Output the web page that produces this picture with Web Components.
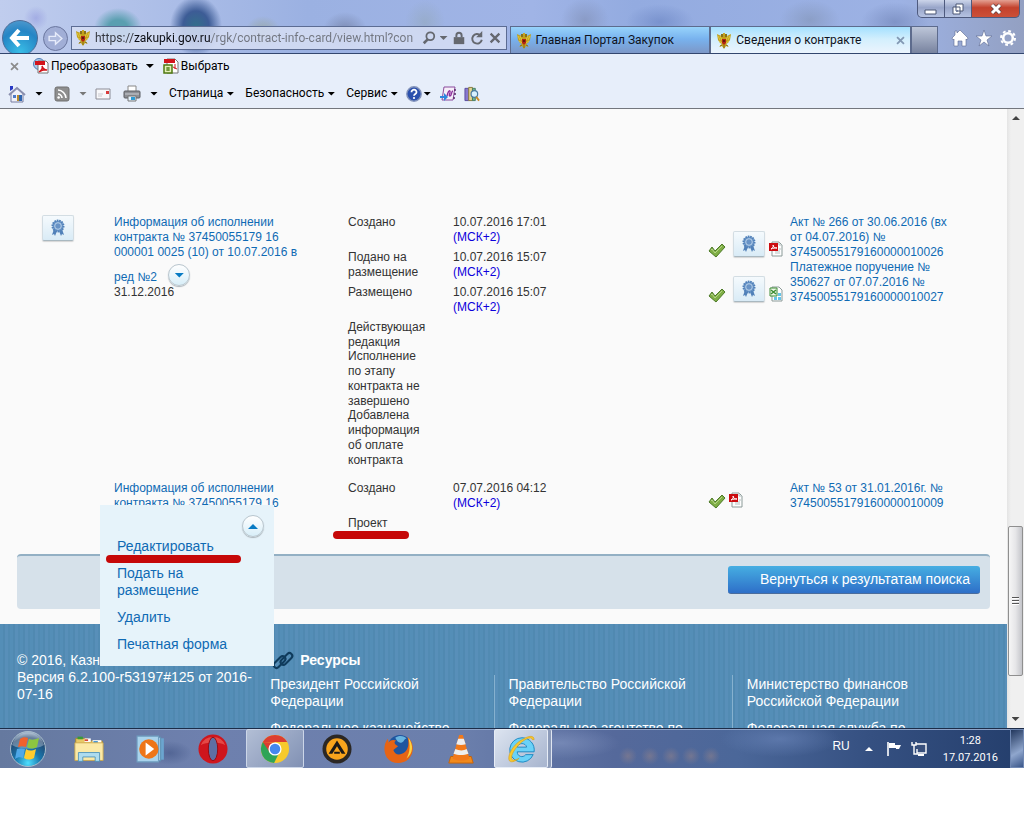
<!DOCTYPE html>
<html lang="ru">
<head>
<meta charset="utf-8">
<title>Сведения о контракте</title>
<style>
    body {
        margin: 0;
        background: #fff;
        font: 12px/15px "Liberation Sans", Arial, sans-serif;
        --ui-font: Roboto, "Noto Sans", sans-serif;
        --link: #0f6ab4;
        --mark: #c60808;
    }
</style>
</head>
<body>
<desk-top>
    <browser-chrome>
        <browser-tab>Главная Портал Закупок</browser-tab>
        <browser-tab active>Сведения о контракте</browser-tab>
    </browser-chrome>
    <page-view>
        <contract-records></contract-records>
        <action-bar>Вернуться к результатам поиска</action-bar>
        <site-footer></site-footer>
    </page-view>
    <task-bar></task-bar>
</desk-top>

<script>
// Shared inline icons, [viewBox, markup]
const ICONS = {
    eagle: ['0 0 16 16', `<path d="M1 1l1 6 2 3 2 1-3 3 3-1 2 3 2-3 3 1-3-3 2-1 2-3 1-6-2 1-2 1-1-2H7L6 3 3 2z" fill="#c2a01a"/><path d="M2 3l2 4M14 3l-2 4M4 3l2 4M12 3l-2 4M3 8l3 2M13 8l-3 2" stroke="#e6d04c" stroke-width=".800"/><path d="M5 1h2v3H5zM9 1h2v3H9z" fill="#86701c"/><path d="M7 0h2v2H7z" fill="#c9a622"/><path d="M6 6h4v4l-2 2-2-2z" fill="#b12414"/><path d="M7 7h2v2H7z" fill="#5d1a12"/><path d="M4 13l2-1M12 13l-2-1M8 12v3" stroke="#86701c"/>`],
    search: ['0 0 16 16', `<circle cx="9.500" cy="6" r="4.500" fill="none" stroke="#65686f" stroke-width="2"/><path d="M6.500 9.500L2 14" stroke="#65686f" stroke-width="3"/>`],
    lock: ['0 0 16 16', `<path d="M2 7h12v8H2z" fill="#65686f"/><path d="M5 7V5a3 3 0 0 1 6 0v2" fill="none" stroke="#65686f" stroke-width="2.200"/>`],
    refresh: ['0 0 16 16', `<path d="M12 5a5.500 5.500 0 1 0 1.500 5" fill="none" stroke="#65686f" stroke-width="2.200"/><path d="M14 0v7H7z" fill="#65686f"/>`],
    cross: ['0 0 16 16', `<path d="M3 3l10 10M13 3L3 13" stroke="currentColor" stroke-width="2.600"/>`],
    back: ['0 0 24 24', `<path d="M11 4l-7 8 7 8M5 12h16" fill="none" stroke="#fff" stroke-width="4"/>`],
    forward: ['0 0 24 24', `<path d="M3 9h9V4l9 8-9 8v-5H3z" fill="#aebadd" stroke="#e6ebfa" stroke-width="2"/>`],
    home: ['0 0 16 16', `<path d="M8 0l8 8-1 2-1-1v7H10v-5H6v5H2V9l-1 1-1-2 3-3V1h2v2z" fill="#fff" stroke="#5b6891" stroke-width=".600"/>`],
    star: ['0 0 16 16', `<path d="M8 0l2 6h6l-5 4 2 6-5-4-5 4 2-6-5-4h6z" fill="#fff" stroke="#5b6891" stroke-width=".600"/>`],
    gear: ['0 0 16 16', `<circle cx="8" cy="8" r="7" fill="none" stroke="#fff" stroke-width="2" stroke-dasharray="2.800 2.700"/><circle cx="8" cy="8" r="4.800" fill="none" stroke="#fff" stroke-width="2.600"/>`],
    pdfConvert: ['0 0 16 16', `<circle cx="6" cy="6" r="5.500" fill="#a9c7e8" stroke="#4f7db5"/><path d="M5 3h8l2 2v10H5z" fill="#fff" stroke="#777"/><path d="M2 3h10v4H2z" fill="#d2141b"/><path d="M6 14c3-2 4-4 3-6 1 3 3 4 5 4-3-1-5 0-8 2z" fill="none" stroke="#d2141b" stroke-width="1.500"/>`],
    pdfSelect: ['0 0 16 16', `<path d="M4 1h8l3 3v11H4z" fill="#fff" stroke="#777"/><path d="M1 1h11v4H1z" fill="#d2141b"/><path d="M10 9l4 2M12 6v5" stroke="#d2141b"/><path d="M1 7h8v8H1z" fill="#e4efb9" stroke="#4f7a11" stroke-width="1.500"/><path d="M3 10h4M3 12h4M5 9v4" stroke="#4f7a11"/>`],
    house: ['0 0 18 18', `<path d="M3 8l6-5 6 5v9H3z" fill="#eef0fa" stroke="#777ca0"/><path d="M1 10l8-7 8 7" fill="none" stroke="#8a8fae" stroke-width="2"/><path d="M2 1h3v3L2 6z" fill="#2738c4"/><path d="M5 10h3v3H5z" fill="#4c79c8"/><path d="M9 10h2v6H9z" fill="#b98a2a"/><path d="M11 10h3v6h-3z" fill="#2f66b0"/>`],
    rss: ['0 0 16 16', `<rect x="1" y="1" width="14" height="14" rx="2" fill="#8e8e8e" stroke="#707070"/><path d="M4 4c4 0 8 4 8 8M4 8c2 0 4 2 4 4" fill="none" stroke="#fff" stroke-width="1.600"/><circle cx="4.600" cy="11.500" r="1.300" fill="#fff"/>`],
    mail: ['0 0 16 12', `<path d="M1 1h14v10H1z" fill="#f8f8fa" stroke="#8c8c96"/><path d="M11 3h3v3h-3z" fill="#d83a3a"/><path d="M3 6h5M3 8h4" stroke="#c9c9d0"/>`],
    printer: ['0 0 18 18', `<path d="M5 1h8v6H5z" fill="#fff" stroke="#888"/><rect x="1" y="6" width="16" height="7" rx="1" fill="#8d8f95" stroke="#5b5d63"/><path d="M2 9h14" stroke="#c9ccd2"/><path d="M5 11h8v5H5z" fill="#e5f1fb" stroke="#777"/><path d="M8 12h4v3H8z" fill="#2e9bd4"/>`],
    help: ['0 0 16 16', `<circle cx="8" cy="8" r="7.200" fill="#2b50ad" stroke="#8494bb" stroke-width="1.400"/><path d="M5.500 6.200c0-3.400 5.200-3.200 5 0 0 1.800-2.500 1.800-2.500 3.600" fill="none" stroke="#fff" stroke-width="1.800"/><circle cx="8" cy="12" r="1.100" fill="#fff"/>`],
    onenote: ['0 0 16 16', `<path d="M4 1h11l-2 13H2z" fill="#f6eef9" stroke="#8a4b9c"/><path d="M7 10c1-4 2-6 3-5s-2 5 0 5 1-5 3-5" fill="none" stroke="#8c2f9c" stroke-width="1.300"/><path d="M15 3v2M15 7v2M14 11v2" stroke="#5a2468" stroke-width="1.500"/><path d="M0 10h4V7l4 4-4 4v-3H0z" fill="#2f86dd"/>`],
    research: ['0 0 17 16', `<path d="M1 2h4v13H1z" fill="#8878cf" stroke="#584b9c"/><path d="M5 1h4v14H5z" fill="#e4d591" stroke="#897a3c"/><path d="M9 2h3v13H9z" fill="#6fb491" stroke="#477c62"/><circle cx="11" cy="8" r="3.500" fill="#d8f1ff" stroke="#4d7ca3" stroke-width="1.300"/><path d="M13 11l3 4" stroke="#c98a24" stroke-width="2"/>`],
    rosette: ['0 0 16 16', `<path d="M4 9l-2 6 2-1 1 2 2-5h2l2 5 1-2 2 1-2-6z" fill="#5181b9"/><circle cx="8" cy="6" r="5.500" fill="#6a96c8" stroke="#5181b9" stroke-width="2" stroke-dasharray="1.600 .800"/><circle cx="8" cy="6" r="3.300" fill="#6893c6" stroke="#b9d2ea"/>`],
    check: ['0 0 16 14', `<path d="M0 8l3-4 3 4 7-7 3 3-9 10z" fill="#7fae45" stroke="#4d7a28" stroke-linejoin="round"/><path d="M2 7l1-1 3 4 7-7" fill="none" stroke="#b5d488"/>`],
    pdf: ['0 0 14 16', `<path d="M3 1h7l3 3v11H3z" fill="#fdfdfd" stroke="#8b9a98"/><path d="M10 1v3h3M6 12h5M6 10h5M10 8h2" fill="none" stroke="#b6c1c1"/><path d="M0 2h9v8H0z" fill="#cc0c10"/><path d="M2 8c2-1 3-3 2-4 0 2 2 3 4 3-2 0-4 0-6 1z" fill="none" stroke="#fff"/>`],
    xls: ['0 0 14 16', `<path d="M3 1h7l3 3v11H3z" fill="#fdfdfd" stroke="#8b9a98"/><path d="M9 7h3v3H9zM5 11h3v3H5zM9 11h3v3H9z" fill="#65c4e8"/><path d="M1 2h7v8H1z" fill="#eef7e7" stroke="#3d8d34"/><path d="M2 4l5 4M7 4L2 8" stroke="#3d8d34" stroke-width="1.500"/>`],
    chain: ['0 0 20 18', `<g fill="none" stroke="#0f3b5c" stroke-width="2.200"><rect x="-1" y="8" width="15" height="6" rx="3" transform="rotate(-45 6 11)"/><rect x="6" y="4" width="15" height="6" rx="3" transform="rotate(-45 14 7)"/></g>`],
    orb: ['0 0 38 38', `<defs><radialGradient id="o" cx=".5" cy=".9" r=".9"><stop offset="0" stop-color="#4fe0ff"/><stop offset=".4" stop-color="#1877ad"/><stop offset=".8" stop-color="#24466f"/><stop offset="1" stop-color="#a7bdd3"/></radialGradient></defs><circle cx="19" cy="19" r="17.500" fill="url(#o)" stroke="#a9bccb"/><path d="M3 15a16.500 16.500 0 0 1 32 0c-8 5-24 5-32 0z" fill="#fff" opacity=".3"/><path d="M11 9c3-2 5-2 8-1l-2 9c-3-1-5-1-8 0z" fill="#f0622c"/><path d="M20 9c3 1 5 1 10-1l-2 9c-4 2-7 2-10 0z" fill="#8dc63f"/><path d="M8 19c3-1 5-1 8 0l-2 9c-3-1-5-1-8 1z" fill="#4fa8e8"/><path d="M17 19c3 2 6 2 10 0l-2 9c-4 2-7 2-10 0z" fill="#ffcc2e"/>`],
    explorer: ['0 0 34 30', `<path d="M2 3h12l2 3h16v20H2z" fill="#e8c966" stroke="#a68629"/><path d="M4 1h6v3H4z" fill="#3a9b36"/><path d="M12 3h7v4h-7z" fill="#fff"/><path d="M12 4h4v2h-4z" fill="#d84430"/><path d="M21 5h10v3H21z" fill="#fff"/><path d="M22 6h5v2h-5z" fill="#3d94d6"/><path d="M1 8h32v20H1z" fill="#fbe9a6" stroke="#c8a64c"/><path d="M5 29V19h24v10h-5v-5H10v5z" fill="#aedcef" stroke="#4f93b8"/>`],
    player: ['0 0 28 26', `<path d="M9 3h17v20H9z" fill="#6ba5cf"/><path d="M6 2h17v22H6z" fill="#9fcae5" stroke="#5f93b5"/><path d="M1 1h20v24H1z" fill="#a9d3ec" stroke="#6f9ec0"/><circle cx="12" cy="13" r="9" fill="#ee7518"/><path d="M9 7l8 6-8 6z" fill="#fff"/>`],
    opera: ['0 0 32 32', `<ellipse cx="16" cy="16" rx="15.500" ry="15.500" fill="#cf151d"/><path d="M3 12a14 14 0 0 1 26 0c-5-4-21-4-26 0z" fill="#f26a62" opacity=".6"/><ellipse cx="16" cy="16" rx="5" ry="12.500" fill="#5d6fa3" stroke="#98090f"/>`],
    chrome: ['0 0 32 32', `<circle cx="16" cy="16" r="15" fill="#f7ca2d"/><path d="M16 16L3 8.500A15 15 0 0 0 15 31l6-12z" fill="#2fa457"/><path d="M3 8.500A15 15 0 0 1 29 8.500H16z" fill="#dc3e31"/><path d="M3 8.500L10 19l6-10z" fill="#dc3e31"/><circle cx="16" cy="16" r="7" fill="#fff"/><circle cx="16" cy="16" r="5.600" fill="#4587ee"/>`],
    aimp: ['0 0 32 32', `<circle cx="16" cy="16" r="15.500" fill="#2b2724"/><circle cx="16" cy="16" r="11.500" fill="#f9a41c"/><path d="M16 7l9 14h-4l-5-8-5 8H7zM13 19h6v2h-6z" fill="#1d1a18"/>`],
    firefox: ['0 0 32 32', `<circle cx="17" cy="14" r="13" fill="#1f559f"/><path d="M12 4c4-3 10-2 12 1-3 0-2 3-5 4s-5-1-7-5z" fill="#67b3df"/><path d="M25 3c7 6 8 17 1 24-7 6-18 5-23-2C-1 18 0 10 4 5l1 4c2-3 5-3 8-2-3 2-2 4 2 6l-5 4c1 4 5 6 9 4 5-1 9-8 6-18z" fill="#e66414"/><path d="M26 4c6 8 5 17-2 22 4-7 4-14 2-22z" fill="#ffd340"/>`],
    vlc: ['0 0 28 32', `<path d="M3 24h22l2 7H1z" fill="#f08a1c" stroke="#c66208"/><path d="M12 1h4l7 25c-4 3-14 3-18 0z" fill="#f1791a"/><path d="M11 5h6l2 6c-3 1-7 1-10 0zM8 16c4 2 9 2 12 0l2 5c-5 2-11 2-16 0z" fill="#eee"/>`],
    ie: ['0 0 32 32', `<path d="M17 4a13 13 0 1 0 12 18h-8c-3 4-9 2-9-3h18A13 13 0 0 0 17 4zm-5 10c1-5 9-5 10 0z" fill="#6ad2f8" stroke="#1a86c0"/><path d="M30 6c0-5-6-4-11-1C10 9 2 20 3 27c1 5 7 2 11-1-5 2-8 3-8-1 0-5 7-14 13-18 4-3 9-4 9-1z" fill="#f8c92f" stroke="#d49b16" stroke-width=".600"/>`],
    flag: ['0 0 14 16', `<path d="M1 1v14" stroke="#fff" stroke-width="1.600"/><path d="M2 2h6v2h6l-2 4H9V7H2z" fill="#fff"/>`],
    network: ['0 0 16 16', `<path d="M5 3h10v9H6V8" fill="#39507c" stroke="#fff" stroke-width="1.400"/><path d="M7 14h6" stroke="#fff" stroke-width="2"/><path d="M1 1v3h4V1M3 4v9h4" fill="none" stroke="#fff" stroke-width="1.400"/>`]
};

// Attach an open shadow root and fill it
function render(host, html) {
    host.attachShadow({mode: 'open'}).innerHTML = html;
}

class UiIcon extends HTMLElement {
    constructor() {
        super();
        this.attachShadow({mode: 'open'});
    }

    connectedCallback() {
        const [box, markup] = ICONS[this.getAttribute('name')];
        this.shadowRoot.innerHTML = `
            <style>
                :host { display: inline-block; flex: none; width: 16px; height: 16px; }
                svg { display: block; width: 100%; height: 100%; overflow: visible; }
            </style>
            <svg viewBox="${box}" aria-hidden="true">${markup}</svg>
        `;
    }
}
customElements.define('ui-icon', UiIcon);

// Small black triangle used by the tool bars
class DropArrow extends HTMLElement {
    constructor() {
        super();
        render(this, `
            <style>
                :host {
                    display: inline-block;
                    flex: none;
                    width: 8px;
                    height: 4px;
                    background: currentColor;
                    clip-path: polygon(0 0, 100% 0, 50% 100%);
                }
            </style>
        `);
    }
}
customElements.define('drop-arrow', DropArrow);

class DeskTop extends HTMLElement {
    constructor() {
        super();
        render(this, `
            <style>
                :host {
                    display: flex;
                    flex-direction: column;
                    height: calc(100vh - 72px);
                    overflow: hidden;
                }
            </style>
            <slot></slot>
        `);
    }
}
customElements.define('desk-top', DeskTop);

class BrowserTab extends HTMLElement {
    constructor() {
        super();
        render(this, `
            <style>
                :host { display: block; flex: 1; min-width: 0; }
                .tab {
                    display: flex;
                    align-items: center;
                    gap: 4px;
                    height: 28px;
                    padding: 0 4px 0 5px;
                    border: 1px solid #5d6b8d;
                    border-bottom: 0;
                    box-sizing: border-box;
                    background: linear-gradient(#97d3fb, #78b2ee 45%, #7d95c4);
                    color: #10131c;
                    font: 12px/15px var(--ui-font);
                }
                :host([active]) .tab { background: linear-gradient(#a4e0ff, #d3effd 45%, #edf4fd); }
                button { flex: 1; padding: 0; border: 0; background: none; font: inherit; color: inherit; text-align: left; white-space: nowrap; }
                .close { display: none; flex: none; color: #8298b3; }
                .close ui-icon { display: block; width: 11px; height: 11px; }
                :host([active]) .close { display: block; }
            </style>
            <div class="tab">
                <ui-icon name="eagle"></ui-icon>
                <button><slot></slot></button>
                <button class="close" aria-label="Закрыть вкладку"><ui-icon name="cross"></ui-icon></button>
            </div>
        `);
    }
}
customElements.define('browser-tab', BrowserTab);

class BrowserChrome extends HTMLElement {
    constructor() {
        super();
        render(this, `
            <style>
                :host { display: block; flex: none; font: 12px/15px var(--ui-font); }
                button { padding: 0; border: 0; background: none; font: inherit; color: inherit; }

                /* Glass frame with the wallpaper showing through */
                .glass {
                    height: 54px;
                    overflow: hidden;
                    box-sizing: border-box;
                    border-bottom: 1px solid #33466e;
                    background:
                        radial-gradient(circle at 36px 18px, #8d93dc88 0, transparent 12px),
                        radial-gradient(ellipse 24px 20px at 118px 28px, #5a9fb0 40%, transparent),
                        radial-gradient(ellipse 26px 30px at 196px 26px, #336f8b 0, #3d5c96 50%, #3d5c9600),
                        radial-gradient(ellipse 18px 16px at 263px 32px, #96a497cc, transparent),
                        radial-gradient(ellipse 22px 18px at 345px 30px, #7583a8cc, transparent),
                        radial-gradient(ellipse 20px 22px at 425px 22px, #94a9c0aa, transparent),
                        radial-gradient(ellipse 24px 22px at 585px 20px, #8291b8aa, transparent),
                        radial-gradient(ellipse 34px 18px at 660px 22px, #6c86c4aa, transparent),
                        radial-gradient(ellipse 30px 20px at 810px 20px, #8496b9aa, transparent),
                        radial-gradient(ellipse 34px 20px at 895px 22px, #7185b8aa, transparent),
                        linear-gradient(90deg, #c0cdee, #9bb1e2 30%, #a0b4e6 52%, #93abe0 62%, #9db2e4 88%, #93a0c2);
                }
                .controls { display: flex; justify-content: flex-end; height: 18px; padding-right: 4px; }
                .controls button {
                    display: grid;
                    place-items: center;
                    width: 27px;
                    border: 1px solid #4e5a7e;
                    border-width: 0 1px 1px 0;
                    background: linear-gradient(#ccd5ea, #98a5c9 45%, #b6c3e2);
                }
                .controls .min { width: 28px; border-left-width: 1px; border-radius: 0 0 0 5px; }
                .controls .shut { width: 48px; border-radius: 0 0 5px 0; background: linear-gradient(#e4a192, #c3412c 45%, #cc5038); }
                .controls svg { width: 14px; height: 12px; }

                .nav { display: flex; align-items: flex-start; padding: 8px 8px 0 2px; }
                .back {
                    width: 36px; height: 36px;
                    margin: -6px 5px 0 0;
                    border: 1px solid #4c6c97;
                    border-radius: 50%;
                    background: radial-gradient(circle at 50% 90%, #39bde6, #2585c5 60%, #5c9fd0);
                }
                .back ui-icon { width: 24px; height: 24px; vertical-align: middle; }
                .next {
                    width: 25px; height: 25px;
                    margin-right: 3px;
                    border: 1px solid #6b779f;
                    border-radius: 50%;
                    background: #a1aed6;
                }
                .next ui-icon { width: 17px; height: 17px; vertical-align: middle; }
                .address {
                    display: flex;
                    flex: 426;
                    align-items: center;
                    gap: 4px;
                    height: 24px;
                    padding: 0 4px 0 3px;
                    border: 1px solid #5c6c93;
                    box-sizing: border-box;
                    background: #d5def3dd;
                    color: #65686f;
                }
                /* Host name is darker than the rest of the address */
                .address input {
                    flex: 1;
                    min-width: 0;
                    padding: 0;
                    border: 0;
                    font: inherit;
                    background: linear-gradient(90deg, #34373f 38px, #0c0e14 38px 116px, #71757f 116px);
                    -webkit-background-clip: text;
                    background-clip: text;
                    color: transparent;
                }
                .address button { display: flex; }
                .address button ui-icon { width: 14px; height: 14px; }
                .tabs { display: flex; flex: 401; margin-left: 3px; }
                .new-tab { width: 27px; height: 28px; border: 1px solid #5d6b8d; background: linear-gradient(#bdc6d9, #78839f); }
                .tools { display: flex; gap: 8px; padding: 4px 0 0 14px; }
                .tools button { display: flex; }

                .bars { padding: 0 8px; border-bottom: 1px solid #73767d; background: #e7eefa; color: #000; }
                .bar { display: flex; align-items: center; white-space: nowrap; }
                .bar button { display: flex; align-items: center; }
                .adobe { height: 24px; }
                .adobe .x { margin: 0 13px 0 1px; color: #8c8c8c; }
                .adobe .x ui-icon { width: 11px; height: 11px; }
                .adobe button { gap: 2px; }
                .adobe .arrow { margin: 0 9px 0 8px; }
                .command { height: 30px; padding-top: 1px; box-sizing: border-box; }
                .command .text { gap: 2px; margin-right: 11px; }
                .command drop-arrow { margin-left: 1px; }
                .pair { gap: 8px; margin-right: 11px; }
                .pair.dim drop-arrow { color: #777; }
                .pair ui-icon { width: 18px; height: 18px; }
                .pair.dim ui-icon { width: 16px; height: 16px; }
                .mail { margin: 0 12px 0 -3px; }
                .mail ui-icon { height: 12px; }
                .help { margin: 0 9px 0 -3px; }
                .note { margin-right: 8px; }
            </style>
            <div class="glass">
                <div class="controls">
                    <button class="min" aria-label="Свернуть"><svg viewBox="0 0 14 12"><path d="M1 7h11v4H1z" fill="#fff" stroke="#4b5675"/></svg></button>
                    <button aria-label="Развернуть"><svg viewBox="0 0 14 12"><path d="M5 1h7v7H5zM2 4h7v7H2z" fill="#fff" stroke="#4b5675"/><path d="M5 7h2v2H5z" fill="#74809f"/></svg></button>
                    <button class="shut" aria-label="Закрыть"><svg viewBox="0 0 14 12"><path d="M3 2l8 8M11 2l-8 8" stroke="#604040" stroke-width="4.500"/><path d="M3 2l8 8M11 2l-8 8" stroke="#fff" stroke-width="3"/></svg></button>
                </div>
                <div class="nav">
                    <button class="back" aria-label="Назад"><ui-icon name="back"></ui-icon></button>
                    <button class="next" aria-label="Вперед"><ui-icon name="forward"></ui-icon></button>
                    <div class="address">
                        <ui-icon name="eagle"></ui-icon>
                        <input type="text" aria-label="Адрес" value="https://zakupki.gov.ru/rgk/contract-info-card/view.html?con">
                        <button aria-label="Поиск"><ui-icon name="search"></ui-icon></button>
                        <drop-arrow></drop-arrow>
                        <button aria-label="Безопасность сайта"><ui-icon name="lock"></ui-icon></button>
                        <button aria-label="Обновить"><ui-icon name="refresh"></ui-icon></button>
                        <button aria-label="Остановить"><ui-icon name="cross"></ui-icon></button>
                    </div>
                    <div class="tabs"><slot></slot></div>
                    <button class="new-tab" aria-label="Новая вкладка"></button>
                    <div class="tools">
                        <button aria-label="Домашняя страница"><ui-icon name="home"></ui-icon></button>
                        <button aria-label="Избранное"><ui-icon name="star"></ui-icon></button>
                        <button aria-label="Настройки"><ui-icon name="gear"></ui-icon></button>
                    </div>
                </div>
            </div>
            <div class="bars">
                <div class="bar adobe">
                    <button class="x" aria-label="Закрыть панель"><ui-icon name="cross"></ui-icon></button>
                    <button><ui-icon name="pdfConvert"></ui-icon>Преобразовать</button>
                    <button class="arrow" aria-label="Параметры"><drop-arrow></drop-arrow></button>
                    <button><ui-icon name="pdfSelect"></ui-icon>Выбрать</button>
                </div>
                <div class="bar command">
                    <button class="pair" aria-label="Домой"><ui-icon name="house"></ui-icon><drop-arrow></drop-arrow></button>
                    <button class="pair dim" aria-label="Каналы"><ui-icon name="rss"></ui-icon><drop-arrow></drop-arrow></button>
                    <button class="mail" aria-label="Почта"><ui-icon name="mail"></ui-icon></button>
                    <button class="pair" aria-label="Печать"><ui-icon name="printer"></ui-icon><drop-arrow></drop-arrow></button>
                    <button class="text">Страница<drop-arrow></drop-arrow></button>
                    <button class="text">Безопасность<drop-arrow></drop-arrow></button>
                    <button class="text">Сервис<drop-arrow></drop-arrow></button>
                    <button class="help" aria-label="Справка"><ui-icon name="help"></ui-icon><drop-arrow></drop-arrow></button>
                    <button class="note" aria-label="OneNote"><ui-icon name="onenote"></ui-icon></button>
                    <button aria-label="Справочники"><ui-icon name="research"></ui-icon></button>
                </div>
            </div>
        `);
    }
}
customElements.define('browser-chrome', BrowserChrome);

class PageView extends HTMLElement {
    constructor() {
        super();
        render(this, `
            <style>
                :host { display: flex; flex: 1; min-height: 0; background: #fafafa; }
                .content { flex: 1; min-width: 0; overflow: hidden; }
                .track {
                    display: flex;
                    flex-direction: column;
                    align-items: center;
                    width: 17px;
                    padding: 7px 0;
                    box-sizing: border-box;
                    background: linear-gradient(90deg, #e4e4e4, #f0f0f0 4px);
                    color: #444;
                }
                .up { transform: rotate(180deg); }
                .run { display: flex; flex: 1; flex-direction: column; justify-content: flex-end; padding-bottom: 41px; }
                .thumb {
                    display: grid;
                    place-content: center;
                    gap: 1px;
                    width: 13px;
                    height: 148px;
                    border: 1px solid #8f8f8f;
                    border-radius: 2px;
                    background: linear-gradient(90deg, #f6f6f6, #e6e6e8 50%, #c4c5ca);
                }
                .thumb i { width: 7px; height: 1px; border-bottom: 1px solid #fff; background: #555; }
            </style>
            <div class="content"><slot></slot></div>
            <div class="track">
                <drop-arrow class="up"></drop-arrow>
                <div class="run"><div class="thumb"><i></i><i></i><i></i></div></div>
                <drop-arrow></drop-arrow>
            </div>
        `);
    }
}
customElements.define('page-view', PageView);

// Signature badge button
class SignBadge extends HTMLElement {
    constructor() {
        super();
        render(this, `
            <style>
                :host { display: inline-block; flex: none; }
                button {
                    display: grid;
                    place-items: center;
                    width: 32px;
                    height: 26px;
                    padding: 0;
                    border: 1px solid #d3dde3;
                    border-bottom-color: #a9b8c0;
                    border-radius: 2px;
                    background: linear-gradient(#f5fafd, #d9ebf6);
                    box-shadow: 0 1px 1px #d5d5d5;
                }
            </style>
            <button aria-label="Электронная подпись"><ui-icon name="rosette"></ui-icon></button>
        `);
    }
}
customElements.define('sign-badge', SignBadge);

// Round button that opens the row menu
class RoundToggle extends HTMLElement {
    constructor() {
        super();
        render(this, `
            <style>
                :host { display: inline-block; }
                button {
                    display: grid;
                    place-items: center;
                    width: 22px;
                    height: 22px;
                    padding: 0;
                    border: 1px solid #b9c6ce;
                    border-radius: 50%;
                    background: linear-gradient(#fff, #d8eef8);
                    box-shadow: 0 1px 1px #aab4ba;
                    color: #087bc4;
                }
                drop-arrow { width: 10px; height: 5px; }
                :host([open]) drop-arrow { transform: rotate(180deg); }
            </style>
            <button aria-label="Меню"><drop-arrow></drop-arrow></button>
        `);
    }
}
customElements.define('round-toggle', RoundToggle);

class RowMenu extends HTMLElement {
    constructor() {
        super();
        render(this, `
            <style>
                :host {
                    display: block;
                    z-index: 2;
                    width: 174px;
                    padding: 10px 10px 13px 17px;
                    box-sizing: border-box;
                    background: #e6f3fa;
                    font-size: 14px;
                    line-height: 17px;
                }
                .top { display: flex; justify-content: flex-end; height: 23px; }
                ul { display: grid; gap: 10px; margin: 0; padding: 0 30px 0 0; list-style: none; }
                ::slotted(li) { position: relative; }
            </style>
            <div class="top"><round-toggle open></round-toggle></div>
            <ul><slot></slot></ul>
        `);
    }
}
customElements.define('row-menu', RowMenu);

class ContractRecords extends HTMLElement {
    constructor() {
        super();
        render(this, `
            <style>
                :host { display: block; padding-top: 106px; color: #333; }
                table { width: 100%; border-collapse: collapse; table-layout: fixed; }
                .sign { width: 114px; }
                .info { width: 234px; }
                .history { width: 361px; }
                td { padding: 0 0 13px; vertical-align: top; }
                tr:last-child td { padding-bottom: 0; }
                td.sign { padding-left: 42px; box-sizing: border-box; }
                td.info { position: relative; }
                td.info p { width: 190px; margin: 0; }
                td a { color: var(--link); text-decoration: none; }
                p round-toggle { margin: 4px 0 -2px 8px; vertical-align: 3px; }

                dl { display: grid; grid-template-columns: 80px 1fr; gap: 5px 25px; margin: 0; }
                dt, dd { margin: 0; }
                dt { grid-column: 1; }
                dt p { margin: 0; }
                dt p + p { margin-top: -1px; }
                dd a { display: block; color: #0d00dc; }

                .doc { display: grid; grid-template-columns: 77px 166px; gap: 4px; align-items: end; }
                .files { display: flex; align-items: flex-end; gap: 4px; padding-bottom: 3px; }
                .files .mark { width: 16px; height: 14px; }
                .files sign-badge { margin-left: 4px; }
                .files .file { width: 14px; }

                row-menu { position: absolute; top: 24px; left: -14px; }

                /* Red marker strokes under the highlighted words */
                .marked { position: relative; }
                .marked::after {
                    content: "";
                    position: absolute;
                    top: 15px;
                    left: -15px;
                    width: 76px;
                    height: 8px;
                    border-radius: 4px;
                    background: var(--mark);
                }
                li.marked::after { top: 17px; left: -11px; width: 135px; }
            </style>
            <table aria-label="Информация об исполнении контракта">
                <colgroup><col class="sign"><col class="info"><col class="history"><col></colgroup>
                <tr>
                    <td class="sign"><sign-badge></sign-badge></td>
                    <td class="info">
                        <p><a href="#">Информация об исполнении контракта № 37450055179 16 000001 0025 (10) от 10.07.2016 в ред №2</a> <round-toggle></round-toggle></p>
                        <p>31.12.2016</p>
                    </td>
                    <td class="history">
                        <dl>
                            <dt>Создано</dt><dd>10.07.2016 17:01 <a href="#">(МСК+2)</a></dd>
                            <dt>Подано на размещение</dt><dd>10.07.2016 15:07 <a href="#">(МСК+2)</a></dd>
                            <dt>Размещено</dt><dd>10.07.2016 15:07 <a href="#">(МСК+2)</a></dd>
                            <dt>
                                <p>Действующая редакция</p>
                                <p>Исполнение по этапу контракта не завершено</p>
                                <p>Добавлена информация об оплате контракта</p>
                            </dt>
                        </dl>
                    </td>
                    <td>
                        <div class="doc">
                            <div class="files"><ui-icon class="mark" name="check"></ui-icon><sign-badge></sign-badge><ui-icon class="file" name="pdf"></ui-icon></div>
                            <a href="#">Акт № 266 от 30.06.2016 (вх от 04.07.2016) № 37450055179160000010026</a>
                        </div>
                        <div class="doc">
                            <div class="files"><ui-icon class="mark" name="check"></ui-icon><sign-badge></sign-badge><ui-icon class="file" name="xls"></ui-icon></div>
                            <a href="#">Платежное поручение № 350627 от 07.07.2016 № 37450055179160000010027</a>
                        </div>
                    </td>
                </tr>
                <tr>
                    <td class="sign"></td>
                    <td class="info">
                        <p><a href="#">Информация об исполнении контракта № 37450055179 16</a></p>
                        <row-menu>
                            <li class="marked"><a href="#">Редактировать</a></li>
                            <li><a href="#">Подать на размещение</a></li>
                            <li><a href="#">Удалить</a></li>
                            <li><a href="#">Печатная форма</a></li>
                        </row-menu>
                    </td>
                    <td class="history">
                        <dl>
                            <dt>Создано</dt><dd>07.07.2016 04:12 <a href="#">(МСК+2)</a></dd>
                            <dt class="marked">Проект</dt>
                        </dl>
                    </td>
                    <td>
                        <div class="doc">
                            <div class="files"><ui-icon class="mark" name="check"></ui-icon><ui-icon class="file" name="pdf"></ui-icon></div>
                            <a href="#">Акт № 53 от 31.01.2016г. № 37450055179160000010009</a>
                        </div>
                    </td>
                </tr>
            </table>
        `);
    }
}
customElements.define('contract-records', ContractRecords);

class ActionBar extends HTMLElement {
    constructor() {
        super();
        render(this, `
            <style>
                :host {
                    display: flex;
                    justify-content: flex-end;
                    margin: 23px 17px 15px;
                    padding: 10px 10px 15px;
                    border-top: 2px solid #93b0c4;
                    border-radius: 4px;
                    background: #d6e1ea;
                }
                button {
                    height: 28px;
                    padding: 0 10px 0 32px;
                    border: 0;
                    border-bottom: 1px solid #4a6c9c;
                    border-radius: 3px;
                    background: linear-gradient(#46aee2, #2e6fc8);
                    color: #fff;
                    font: 14px/17px "Liberation Sans", Arial, sans-serif;
                }
            </style>
            <button><slot></slot></button>
        `);
    }
}
customElements.define('action-bar', ActionBar);

class SiteFooter extends HTMLElement {
    constructor() {
        super();
        render(this, `
            <style>
                :host {
                    display: grid;
                    grid-template-columns: 1fr 3fr;
                    padding: 28px 37px 30px 17px;
                    background: repeating-linear-gradient(90deg, #548eb7 0 3px, #5089b1 3px 5px, #588fb9 5px 8px, #528bb3 8px 10px);
                    color: #fff;
                    font-size: 14px;
                    line-height: 17px;
                }
                p { margin: 0; }
                h2 { display: flex; gap: 7px; margin: 0 0 6px 18px; font-size: 14px; }
                h2 ui-icon { width: 20px; height: 17px; }
                .links { display: grid; grid-template-columns: repeat(3, 1fr); }
                ul { display: grid; gap: 10px; margin: 0; padding: 1px 30px 0 14px; border-left: 1px solid #86b1cf; list-style: none; }
                ul:first-child { border-color: transparent; }
                a { color: inherit; text-decoration: none; }
            </style>
            <div>
                <p>© 2016, Казначейство России</p>
                <p>Версия 6.2.100-r53197#125 от 2016-07-16</p>
            </div>
            <div>
                <h2><ui-icon name="chain"></ui-icon>Ресурсы</h2>
                <div class="links">
                    <ul><li><a href="#">Президент Российской Федерации</a></li><li><a href="#">Федеральное казначейство</a></li></ul>
                    <ul><li><a href="#">Правительство Российской Федерации</a></li><li><a href="#">Федеральное агентство по</a></li></ul>
                    <ul><li><a href="#">Министерство финансов Российской Федерации</a></li><li><a href="#">Федеральная служба по</a></li></ul>
                </div>
            </div>
        `);
    }
}
customElements.define('site-footer', SiteFooter);

class TaskBar extends HTMLElement {
    constructor() {
        super();
        render(this, `
            <style>
                :host {
                    display: flex;
                    flex: none;
                    align-items: stretch;
                    gap: 4px;
                    height: 40px;
                    box-sizing: border-box;
                    border-top: 1px solid #1c2c48;
                    box-shadow: inset 0 1px #8ea3c8;
                    background:
                        radial-gradient(ellipse 22px 12px at 170px 24px, #46598aaa, transparent),
                        radial-gradient(ellipse 60px 16px at 560px 14px, #8193bfaa, transparent),
                        radial-gradient(circle 9px at 628px 27px, #8b7f8b99, transparent),
                        radial-gradient(circle 9px at 650px 27px, #8b7f8b99, transparent),
                        radial-gradient(circle 9px at 671px 27px, #8b7f8b99, transparent),
                        radial-gradient(circle 9px at 691px 27px, #8b7f8b99, transparent),
                        radial-gradient(circle 9px at 711px 27px, #8b7f8b99, transparent),
                        radial-gradient(ellipse 60px 18px at 780px 10px, #6883b7aa, transparent),
                        linear-gradient(90deg, #65799f, #6e80ae 20%, #6b7fac 45%, #55699b 60%, #4b6799 72%, #355081 85%, #243e6c);
                    color: #fff;
                    font: 11px/17px var(--ui-font);
                }
                button { padding: 0; border: 0; background: none; font: inherit; color: inherit; }
                .app { display: grid; place-items: center; width: 58px; border: 1px solid transparent; border-radius: 2px; box-sizing: border-box; }
                .app ui-icon { width: 30px; height: 30px; }
                .start { width: 56px; }
                .start ui-icon { width: 38px; height: 38px; }
                .running { border-color: #ccd6e8; background: linear-gradient(135deg, #b2bed5, #8191b4); }
                .current { width: 54px; border-color: #e6ecf6; background: linear-gradient(135deg, #dce4f0, #a7b4ce); box-shadow: 3px 0 #8c9bb9, 4px 0 #e0e6f1; }
                .tray { display: flex; align-items: center; margin-left: auto; }
                .lang { margin: 0 15px 5px 0; font: 12px/17px "Liberation Sans", Arial, sans-serif; }
                .more { margin-right: 14px; }
                .more drop-arrow { display: block; transform: rotate(180deg); }
                .tray ui-icon { display: block; }
                .flag { margin-right: 10px; }
                .flag ui-icon { width: 14px; }
                .clock { margin: 0 12px 0 16px; text-align: center; }
                .clock span { display: block; }
                .show { align-self: stretch; width: 14px; border: 1px solid #7088b3; background: linear-gradient(150deg, #22375d, #8fa6cd 60%, #3a5689); }
            </style>
            <button class="app start" aria-label="Пуск"><ui-icon name="orb"></ui-icon></button>
            <button class="app" aria-label="Проводник"><ui-icon name="explorer"></ui-icon></button>
            <button class="app" aria-label="Проигрыватель"><ui-icon name="player"></ui-icon></button>
            <button class="app" aria-label="Opera"><ui-icon name="opera"></ui-icon></button>
            <button class="app running" aria-label="Chrome"><ui-icon name="chrome"></ui-icon></button>
            <button class="app" aria-label="AIMP"><ui-icon name="aimp"></ui-icon></button>
            <button class="app" aria-label="Firefox"><ui-icon name="firefox"></ui-icon></button>
            <button class="app" aria-label="VLC"><ui-icon name="vlc"></ui-icon></button>
            <button class="app current" aria-label="Internet Explorer"><ui-icon name="ie"></ui-icon></button>
            <div class="tray">
                <button class="lang">RU</button>
                <button class="more" aria-label="Скрытые значки"><drop-arrow></drop-arrow></button>
                <button class="flag" aria-label="Центр поддержки"><ui-icon name="flag"></ui-icon></button>
                <button aria-label="Сеть"><ui-icon name="network"></ui-icon></button>
                <button class="clock"><span>1:28</span><span>17.07.2016</span></button>
                <button class="show" aria-label="Показать рабочий стол"></button>
            </div>
        `);
    }
}
customElements.define('task-bar', TaskBar);
</script>
</body>
</html>
